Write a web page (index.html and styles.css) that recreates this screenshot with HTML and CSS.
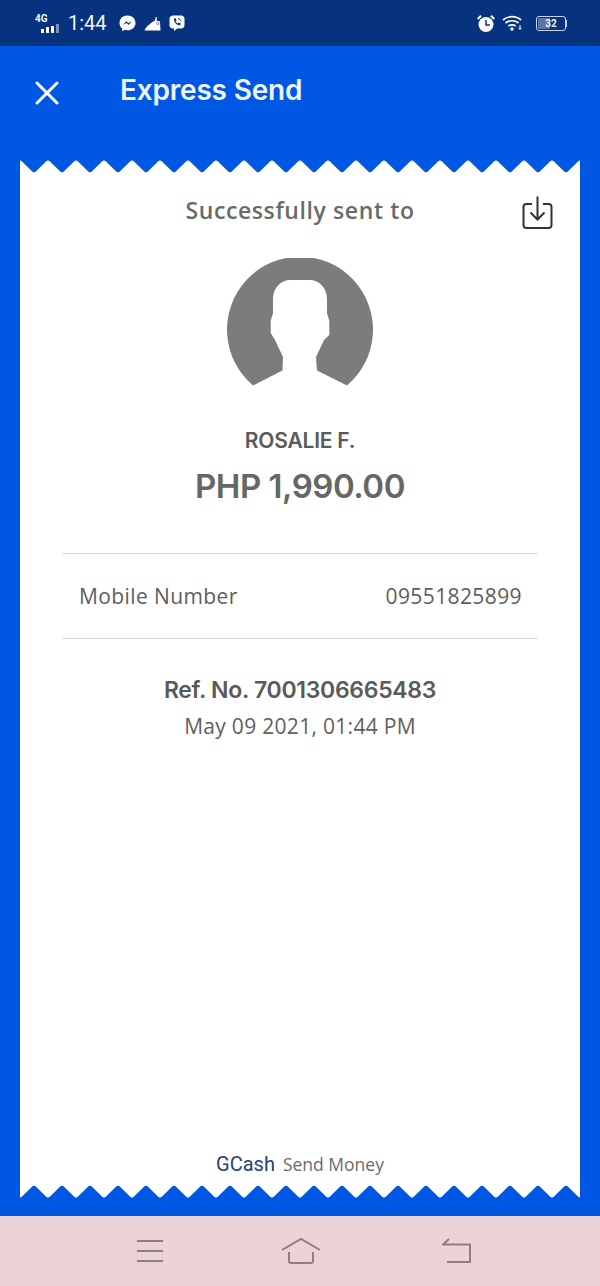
FILE: index.html
```html
<!DOCTYPE html>
<html>
<head>
  <title>Express Send</title>
  <link rel="stylesheet" href="styles.css">
</head>
<body>
  <div class="screen">
    <div class="status-bar">
      <div class="status-left">
        <div class="network">
          <span class="network-label">4G</span>
          <svg class="bars" width="20" height="9" viewBox="0 0 20 9">
            <rect x="0" y="5" width="3" height="4" fill="#fff"/>
            <rect x="5" y="3" width="3" height="6" fill="#fff"/>
            <rect x="10" y="2" width="3" height="7" fill="#fff"/>
            <rect x="15" y="0" width="3" height="9" fill="#8090b5"/>
          </svg>
        </div>
        <span class="clock">1:44</span>
        <svg class="notify" width="17" height="17" viewBox="0 0 17 17">
          <path d="M8.500 0.500C3.900 0.500 0.500 3.700 0.500 7.900C0.500 10.200 1.500 12.100 3.200 13.400L3.200 16.300L5.900 14.800C6.700 15.100 7.600 15.200 8.500 15.200C13.100 15.200 16.500 12 16.500 7.900C16.500 3.700 13.100 0.500 8.500 0.500Z" fill="#fff"/>
          <path d="M3.800 10L7.300 6.200L9.300 8.100L12.900 6.200L9.500 10L7.500 8.100Z" fill="#0a347f"/>
        </svg>
        <svg class="notify" width="17" height="17" viewBox="0 0 17 17">
          <path d="M0.500 15.500C1.500 13.500 3 10.500 5.500 9.500C7 7.500 9 6.500 10.500 6L12 2L13 2.300L12.500 5.500L16 6.500L16.500 15.500Z" fill="#fff"/>
          <path d="M12.500 6.500L15.500 7.300L15 10.500L12 9.500Z" fill="#a9b6d2"/>
        </svg>
        <svg class="notify" width="16" height="17" viewBox="0 0 16 17">
          <path d="M4 0.500H12C14.200 0.500 15.500 1.800 15.500 4V10C15.500 12.200 14.200 13.500 12 13.500H8L5 16.300V13.500H4C1.800 13.500 0.500 12.200 0.500 10V4C0.500 1.800 1.800 0.500 4 0.500Z" fill="#fff"/>
          <path d="M5 3.500L6.600 3.300L7.500 5.300L6.600 6.300C7 7.300 7.800 8.100 8.800 8.500L9.800 7.600L11.700 8.600L11.400 10.200C8 10.800 4.300 7 5 3.500Z" fill="#0a347f"/>
          <path d="M9 3.500C10.500 3.700 11.500 4.800 11.600 6.300" stroke="#0a347f" fill="none"/>
        </svg>
      </div>
      <div class="status-right">
        <svg width="18" height="19" viewBox="0 0 18 19">
          <circle cx="9" cy="10.500" r="7.500" fill="#fff"/>
          <path d="M9 6V11H13" stroke="#0a347f" stroke-width="1.500" fill="none"/>
          <path d="M0.800 5L4 1.800M17.200 5L14 1.800" stroke="#fff" stroke-width="2"/>
        </svg>
        <svg class="wifi" width="21" height="16" viewBox="0 0 21 16">
          <path d="M1 5C6 0.500 14 0.500 19 5M3.500 8C7 5 13 5 16.500 8M6.300 11C8.200 9.500 11.800 9.500 13.700 11" stroke="#fff" stroke-width="1.700" fill="none"/>
          <circle cx="10" cy="14" r="1.700" fill="#fff"/>
          <path d="M18 10V14M16.500 12.800L18 14.500L19.500 12.800" stroke="#fff" fill="none"/>
        </svg>
        <div class="battery">
          <div class="battery-body">
            <div class="battery-level"></div>
            <span class="battery-text">32</span>
          </div>
          <div class="battery-tip"></div>
        </div>
      </div>
    </div>

    <div class="header">
      <svg class="close-icon" width="24" height="24" viewBox="0 0 24 24">
        <path d="M2 2L22 22M22 2L2 22" stroke="#fff" stroke-width="3" stroke-linecap="round"/>
      </svg>
      <h1 class="title">Express Send</h1>
    </div>

    <div class="receipt">
      <svg class="edge" width="560" height="14" viewBox="0 0 560 14">
        <defs>
          <pattern id="teethTop" width="28" height="14" patternUnits="userSpaceOnUse">
            <path d="M0 0.500Q1 0.500 2 1.500L12.500 11.700Q14 13 15.500 11.700L26 1.500Q27 0.500 28 0.500V14H0Z" fill="#fff"/>
          </pattern>
        </defs>
        <rect width="560" height="14" fill="url(#teethTop)"/>
      </svg>
      <div class="receipt-body">
        <div class="sent-row">
          <p class="sent-label">Successfully sent to</p>
          <svg class="save-icon" width="32" height="36" viewBox="0 0 32 36">
            <path d="M10 9H4.500Q1.500 9 1.500 12V30Q1.500 33 4.500 33H26.500Q29.500 33 29.500 30V12Q29.500 9 26.500 9H21" stroke="#333" stroke-width="2" fill="none"/>
            <path d="M15.500 1.500V24M8.500 17.500L15.500 24.500L22.500 17.500" stroke="#333" stroke-width="2" fill="none"/>
          </svg>
        </div>
        <svg class="avatar" width="146" height="128" viewBox="227 263 146 128">
          <path d="M253 390.500A73 73 0 1 1 347 390.500L317 375.500L316 362L324 345L329.300 340V326L327 318V304C327 292 318 285 310 285H290C282 285 273 292 273 304V318L270.700 326V338L275 345L283 362L282.500 375.500Z" fill="#7b7d7c"/>
        </svg>
        <p class="name">ROSALIE F.</p>
        <p class="amount">PHP 1,990.00</p>
        <div class="detail-row">
          <span>Mobile Number</span>
          <span>09551825899</span>
        </div>
        <p class="ref">Ref. No. 7001306665483</p>
        <p class="date">May 09 2021, 01:44 PM</p>
        <div class="footer-note">
          <span class="brand">GCash</span>
          <span class="brand-sub">Send Money</span>
        </div>
      </div>
      <svg class="edge" width="560" height="14" viewBox="0 0 560 14">
        <defs>
          <pattern id="teethBottom" width="28" height="14" patternUnits="userSpaceOnUse">
            <path d="M0 13.500Q1 13.500 2 12.500L12.500 2.300Q14 1 15.500 2.300L26 12.500Q27 13.500 28 13.500V0H0Z" fill="#fff"/>
          </pattern>
        </defs>
        <rect width="560" height="14" fill="url(#teethBottom)"/>
      </svg>
    </div>

    <div class="nav-bar">
      <svg width="28" height="24" viewBox="0 0 28 24">
        <path d="M1 2H27M1 12H27M1 22H27" stroke="#8f7f84" stroke-width="2"/>
      </svg>
      <svg width="44" height="28" viewBox="0 0 44 28">
        <path d="M1 13L20 2L39 13M8 15V24Q8 26 10 26H30Q32 26 32 24V15" stroke="#8f7f84" stroke-width="2" fill="none"/>
      </svg>
      <svg width="30" height="26" viewBox="0 0 30 26">
        <path d="M7 1L1 6.500H28V24H5" stroke="#8f7f84" stroke-width="2" fill="none"/>
      </svg>
    </div>
  </div>
</body>
</html>
```

FILE: styles.css
```css
body {
  margin: 0;
  font-family: "Open Sans", Arial, sans-serif;
  background-color: #0057e4;
}

p, h1 {
  margin: 0;
}

.screen {
  width: 600px;
  height: 1286px;
  display: flex;
  flex-direction: column;
  overflow: hidden;
}

/* status bar */
.status-bar {
  height: 46px;
  background-color: #06327f;
  display: flex;
  justify-content: space-between;
  align-items: center;
  padding: 0 33px 0 35px;
  color: #f2f5fb;
}

.status-left,
.status-right {
  display: flex;
  align-items: center;
}

.network {
  width: 26px;
  display: flex;
  flex-direction: column;
  align-items: flex-end;
  margin-right: 7px;
}

.network-label {
  font-family: Roboto, sans-serif;
  font-size: 10px;
  font-weight: 700;
  line-height: 9px;
  align-self: flex-start;
}

.bars {
  display: block;
  margin-top: 1px;
}

.clock {
  font-family: Roboto, sans-serif;
  font-size: 20px;
  margin-right: 12px;
}

.notify {
  margin-right: 8px;
}

.status-right {
  gap: 7px;
}

.battery {
  display: flex;
  align-items: center;
  margin-left: 6px;
}

.battery-body {
  width: 28px;
  height: 13px;
  border: 1px solid #c8d3ea;
  border-radius: 3px;
  position: relative;
  text-align: center;
}

.battery-level {
  position: absolute;
  left: 1px;
  top: 1px;
  bottom: 1px;
  width: 12px;
  background-color: #5a75ab;
}

.battery-text {
  position: relative;
  font-family: Roboto, sans-serif;
  font-size: 10px;
  font-weight: 700;
  line-height: 13px;
  display: block;
}

.battery-tip {
  width: 1px;
  height: 7px;
  background-color: #c8d3ea;
}

/* header */
.header {
  height: 114px;
  box-sizing: border-box;
  padding: 24px 0 0 35px;
  display: flex;
  align-items: flex-start;
  background-color: #0057e4;
}

.close-icon {
  margin-top: 11px;
}

.title {
  margin-left: 61px;
  color: #eef4fe;
  font-family: Inter, sans-serif;
  font-size: 28px;
  line-height: 40px;
  font-weight: 600;
  letter-spacing: -0.2px;
}

/* receipt */
.receipt {
  margin: 0 20px 18px;
  flex: 1;
  display: flex;
  flex-direction: column;
}

.edge {
  display: block;
  flex: none;
}

.receipt-body {
  flex: 1;
  background-color: #fff;
  display: flex;
  flex-direction: column;
  align-items: center;
  color: #5a5a5a;
}

.sent-row {
  position: relative;
  align-self: stretch;
  text-align: center;
  padding-top: 20px;
}

.sent-label {
  font-size: 23px;
  line-height: 32px;
  font-weight: 600;
  color: #6a6a6a;
  letter-spacing: 0.6px;
}

.save-icon {
  position: absolute;
  right: 26px;
  top: 21px;
}

.avatar {
  display: block;
  margin-top: 32px;
}

.name {
  margin-top: 40px;
  font-family: Inter, sans-serif;
  font-size: 21px;
  line-height: 30px;
  font-weight: 600;
  letter-spacing: -0.2px;
}

.amount {
  margin-top: 7px;
  font-family: Inter, sans-serif;
  font-size: 33px;
  line-height: 46px;
  font-weight: 600;
  color: #666;
  letter-spacing: -0.5px;
}

.detail-row {
  margin-top: 44px;
  width: 476px;
  height: 86px;
  box-sizing: border-box;
  padding: 0 16px 0 17px;
  border-top: 1px solid #d6d6d6;
  border-bottom: 1px solid #d6d6d6;
  display: flex;
  justify-content: space-between;
  align-items: center;
  font-size: 21px;
  color: #5d5d5d;
  letter-spacing: 0.4px;
}

.ref {
  margin-top: 34px;
  font-family: Inter, sans-serif;
  font-size: 23px;
  line-height: 34px;
  font-weight: 600;
  letter-spacing: -0.3px;
}

.date {
  margin-top: 4px;
  font-size: 21px;
  line-height: 30px;
  letter-spacing: 0.3px;
  color: #5f5f5f;
}

.footer-note {
  margin-top: auto;
  margin-bottom: 8px;
  display: flex;
  align-items: baseline;
  gap: 8px;
}

.brand {
  font-family: Roboto, sans-serif;
  font-size: 20px;
  color: #27407a;
}

.brand-sub {
  font-size: 17.500px;
  color: #6b6b6b;
}

/* bottom nav */
.nav-bar {
  height: 70px;
  box-sizing: border-box;
  background-color: #ecd3d7;
  padding: 0 128px 0 136px;
  display: flex;
  justify-content: space-between;
  align-items: center;
}
```
